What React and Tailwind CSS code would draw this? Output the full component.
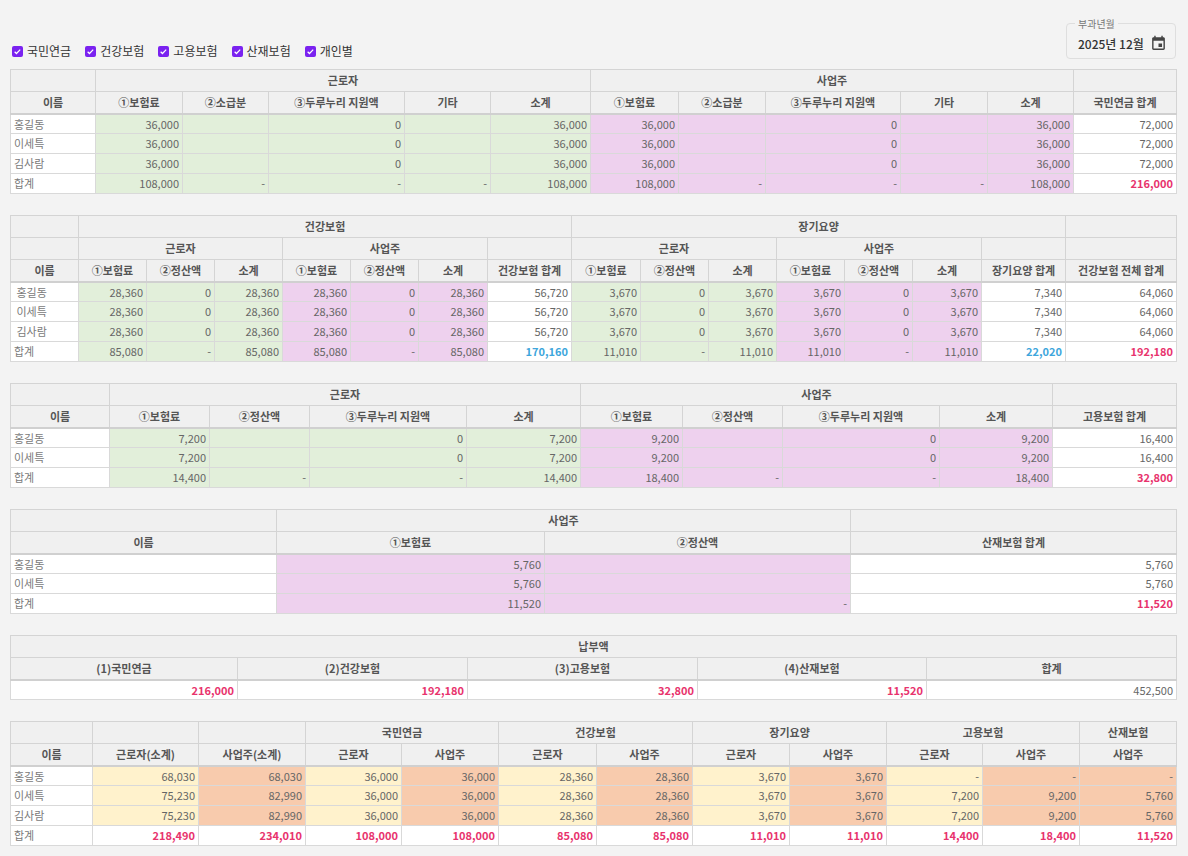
import { useState } from 'react';

const G = 'bg-[#e2efda]';
const P = 'bg-[#eed1ee]';
const Y = 'bg-[#fff2cc]';
const O = 'bg-[#f8cbad]';
const W = 'bg-white';

const R = (v) => ({ v, c: 'red' });
const B = (v) => ({ v, c: 'blue' });

function Th({ children, colSpan, last }) {
  return (
    <th
      colSpan={colSpan}
      className={`h-[22px] border border-[#d4d4d4] bg-[#f0f0f0] px-1 text-center align-middle text-[11px] font-semibold text-[#555] ${last ? 'border-b-2 border-b-[#d0d0d0]' : ''}`}
    >
      {children}
    </th>
  );
}

function Td({ cell, bg, left }) {
  const v = typeof cell === 'object' && cell !== null ? cell.v : cell;
  const c = typeof cell === 'object' && cell !== null ? cell.c : null;
  const color =
    c === 'red'
      ? 'text-[#e8336d] font-bold'
      : c === 'blue'
        ? 'text-[#3ea6dc] font-bold'
        : left
          ? 'text-[#7a7a7a]'
          : 'text-[#666]';
  return (
    <td
      className={`h-[20px] border border-[#d9d9d9] px-[3px] align-middle text-[11px] ${left ? 'text-left' : 'text-right'} ${bg} ${color}`}
    >
      {v}
    </td>
  );
}

function Grid({ widths, head, rows, bgs, totalBgs }) {
  return (
    <table className="mb-[21px] w-full table-fixed border-collapse border border-[#d0d0d0]">
      <colgroup>
        {widths.map((w, i) => (
          <col key={i} style={{ width: w }} />
        ))}
      </colgroup>
      <thead>
        {head.map((hr, i) => (
          <tr key={i}>
            {hr.map(([t, cs], j) => (
              <Th key={j} colSpan={cs} last={i === head.length - 1}>
                {t}
              </Th>
            ))}
          </tr>
        ))}
      </thead>
      <tbody>
        {rows.map((r, i) => {
          const isTotal = r.name === '합계';
          const colors = isTotal && totalBgs ? totalBgs : bgs;
          return (
            <tr key={i}>
              <Td cell={r.name} bg={W} left />
              {r.vals.map((v, j) => (
                <Td key={j} cell={v} bg={colors[j]} />
              ))}
            </tr>
          );
        })}
      </tbody>
    </table>
  );
}

function Check({ label }) {
  const [on, setOn] = useState(true);
  return (
    <label className="flex cursor-pointer items-center gap-[4px]" onClick={() => setOn(!on)}>
      <span
        className={`flex h-[11px] w-[11px] items-center justify-center rounded-[2px] ${on ? 'bg-[#7a22f0]' : 'border border-[#888] bg-white'}`}
      >
        {on && (
          <svg viewBox="0 0 12 12" className="h-[9px] w-[9px]">
            <path d="M2.2 6.3l2.4 2.4 5-5.2" fill="none" stroke="white" strokeWidth="1.6" />
          </svg>
        )}
      </span>
      <span className="text-[12px] leading-[14px] text-[#333]">{label}</span>
    </label>
  );
}

export default function App() {
  const pension = {
    widths: [85, 87, 86, 136, 86, 100, 88, 87, 135, 87, 86, 103],
    head: [
      [['', 1], ['근로자', 5], ['사업주', 5], ['', 1]],
      [
        ['이름', 1], ['①보험료', 1], ['②소급분', 1], ['③두루누리 지원액', 1], ['기타', 1], ['소계', 1],
        ['①보험료', 1], ['②소급분', 1], ['③두루누리 지원액', 1], ['기타', 1], ['소계', 1], ['국민연금 합계', 1],
      ],
    ],
    bgs: [G, G, G, G, G, P, P, P, P, P, W],
    rows: [
      { name: '홍길동', vals: ['36,000', '', '0', '', '36,000', '36,000', '', '0', '', '36,000', '72,000'] },
      { name: '이세특', vals: ['36,000', '', '0', '', '36,000', '36,000', '', '0', '', '36,000', '72,000'] },
      { name: '김사람', vals: ['36,000', '', '0', '', '36,000', '36,000', '', '0', '', '36,000', '72,000'] },
      { name: '합계', vals: ['108,000', '-', '-', '-', '108,000', '108,000', '-', '-', '-', '108,000', R('216,000')] },
    ],
  };

  const hRow = ['28,360', '0', '28,360', '28,360', '0', '28,360', '56,720', '3,670', '0', '3,670', '3,670', '0', '3,670', '7,340', '64,060'];
  const health = {
    widths: [68, 68, 68, 68, 68, 68, 69, 84, 69, 68, 68, 68, 68, 69, 84, 111],
    head: [
      [['', 1], ['건강보험', 7], ['장기요양', 7], ['', 1]],
      [['', 1], ['근로자', 3], ['사업주', 3], ['', 1], ['근로자', 3], ['사업주', 3], ['', 1], ['', 1]],
      [
        ['이름', 1], ['①보험료', 1], ['②정산액', 1], ['소계', 1], ['①보험료', 1], ['②정산액', 1], ['소계', 1], ['건강보험 합계', 1],
        ['①보험료', 1], ['②정산액', 1], ['소계', 1], ['①보험료', 1], ['②정산액', 1], ['소계', 1], ['장기요양 합계', 1], ['건강보험 전체 합계', 1],
      ],
    ],
    bgs: [G, G, G, P, P, P, W, G, G, G, P, P, P, W, W],
    rows: [
      { name: '\u00a0홍길동', vals: hRow },
      { name: '\u00a0이세특', vals: hRow },
      { name: '\u00a0김사람', vals: hRow },
      {
        name: '합계',
        vals: ['85,080', '-', '85,080', '85,080', '-', '85,080', B('170,160'), '11,010', '-', '11,010', '11,010', '-', '11,010', B('22,020'), R('192,180')],
      },
    ],
  };

  const employ = {
    widths: [99, 100, 100, 157, 114, 102, 100, 157, 113, 124],
    head: [
      [['', 1], ['근로자', 4], ['사업주', 4], ['', 1]],
      [
        ['이름', 1], ['①보험료', 1], ['②정산액', 1], ['③두루누리 지원액', 1], ['소계', 1],
        ['①보험료', 1], ['②정산액', 1], ['③두루누리 지원액', 1], ['소계', 1], ['고용보험 합계', 1],
      ],
    ],
    bgs: [G, G, G, G, P, P, P, P, W],
    rows: [
      { name: '홍길동', vals: ['7,200', '', '0', '7,200', '9,200', '', '0', '9,200', '16,400'] },
      { name: '이세특', vals: ['7,200', '', '0', '7,200', '9,200', '', '0', '9,200', '16,400'] },
      { name: '합계', vals: ['14,400', '-', '-', '14,400', '18,400', '-', '-', '18,400', R('32,800')] },
    ],
  };

  const accident = {
    widths: [266, 268, 306, 326],
    head: [
      [['', 1], ['사업주', 2], ['', 1]],
      [['이름', 1], ['①보험료', 1], ['②정산액', 1], ['산재보험 합계', 1]],
    ],
    bgs: [P, P, W],
    rows: [
      { name: '홍길동', vals: ['5,760', '', '5,760'] },
      { name: '이세특', vals: ['5,760', '', '5,760'] },
      { name: '합계', vals: ['11,520', '-', R('11,520')] },
    ],
  };

  const person = {
    widths: [82, 106, 107, 96, 97, 98, 96, 97, 97, 96, 97, 97],
    head: [
      [['', 1], ['', 1], ['', 1], ['국민연금', 2], ['건강보험', 2], ['장기요양', 2], ['고용보험', 2], ['산재보험', 1]],
      [
        ['이름', 1], ['근로자(소계)', 1], ['사업주(소계)', 1], ['근로자', 1], ['사업주', 1], ['근로자', 1], ['사업주', 1],
        ['근로자', 1], ['사업주', 1], ['근로자', 1], ['사업주', 1], ['사업주', 1],
      ],
    ],
    bgs: [Y, O, Y, O, Y, O, Y, O, Y, O, O],
    totalBgs: [W, W, W, W, W, W, W, W, W, W, W],
    rows: [
      { name: '홍길동', vals: ['68,030', '68,030', '36,000', '36,000', '28,360', '28,360', '3,670', '3,670', '-', '-', '-'] },
      { name: '이세특', vals: ['75,230', '82,990', '36,000', '36,000', '28,360', '28,360', '3,670', '3,670', '7,200', '9,200', '5,760'] },
      { name: '김사람', vals: ['75,230', '82,990', '36,000', '36,000', '28,360', '28,360', '3,670', '3,670', '7,200', '9,200', '5,760'] },
      {
        name: '합계',
        vals: ['218,490', '234,010', '108,000', '108,000', '85,080', '85,080', '11,010', '11,010', '14,400', '18,400', '11,520'].map(R),
      },
    ],
  };

  const paid = [R('216,000'), R('192,180'), R('32,800'), R('11,520'), '452,500'];

  return (
    <div
      className="min-h-screen bg-[#f3f3f3] pl-[10px] pr-[12px] pt-[23px]"
      style={{ fontFamily: '"Noto Sans CJK KR", "Noto Sans", sans-serif' }}
    >
      {/* Toolbar */}
      <div className="mb-[10px] flex items-end justify-between">
        <div className="mb-[1px] flex items-center gap-[14px] pl-[2px]">
          <Check label="국민연금" />
          <Check label="건강보험" />
          <Check label="고용보험" />
          <Check label="산재보험" />
          <Check label="개인별" />
        </div>
        <fieldset className="relative flex h-[36px] w-[110px] items-center justify-between rounded-[4px] border border-[#dedede] pl-[11px] pr-[8px]">
          <legend className="absolute -top-[7px] left-[8px] bg-[#f3f3f3] px-[3px] text-[10px] leading-[14px] text-[#777]">
            부과년월
          </legend>
          <span className="mt-[5px] text-[12px] font-medium text-[#333]">2025년 12월</span>
          <svg viewBox="0 0 24 24" className="mt-[4px] h-[17px] w-[17px] fill-[#444]">
            <path d="M17 12h-5v5h5v-5zM16 1v2H8V1H6v2H5c-1.11 0-1.99.9-1.99 2L3 19c0 1.1.89 2 2 2h14c1.1 0 2-.9 2-2V5c0-1.1-.9-2-2-2h-1V1h-2zm3 18H5V8h14v11z" />
          </svg>
        </fieldset>
      </div>

      <Grid {...pension} />
      <Grid {...health} />
      <Grid {...employ} />
      <Grid {...accident} />

      {/* 납부액 */}
      <table className="mb-[21px] w-full table-fixed border-collapse border border-[#d0d0d0]">
        <colgroup>
          {[227, 230, 230, 229, 250].map((w, i) => (
            <col key={i} style={{ width: w }} />
          ))}
        </colgroup>
        <thead>
          <tr>
            <Th colSpan={5}>납부액</Th>
          </tr>
          <tr>
            {['(1)국민연금', '(2)건강보험', '(3)고용보험', '(4)산재보험', '합계'].map((t) => (
              <Th key={t} last>
                {t}
              </Th>
            ))}
          </tr>
        </thead>
        <tbody>
          <tr>
            {paid.map((v, i) => (
              <Td key={i} cell={v} bg={W} />
            ))}
          </tr>
        </tbody>
      </table>

      <Grid {...person} />
    </div>
  );
}
